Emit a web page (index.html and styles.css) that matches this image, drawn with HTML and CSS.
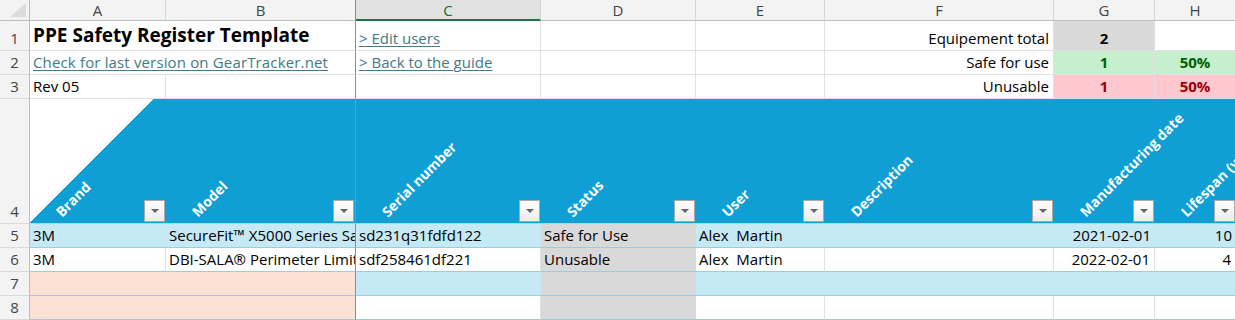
FILE: index.html
```html
<!DOCTYPE html>
<html>
<head>
<meta charset="utf-8">
<link rel="stylesheet" href="styles.css">
</head>
<body>
<div class="sheet">
  <!-- column headers -->
  <div class="corner"><svg width="29" height="20" viewBox="0 0 29 20"><polygon points="26,3 26,17 10,17" fill="#dcdcdc"/></svg></div>
  <div class="h">A</div>
  <div class="h frzh">B</div>
  <div class="h sel">C</div>
  <div class="h">D</div>
  <div class="h">E</div>
  <div class="h">F</div>
  <div class="h">G</div>
  <div class="h">H</div>

  <!-- row 1 -->
  <div class="r">1</div>
  <div class="c over nor title">PPE Safety Register Template</div>
  <div class="c frz"></div>
  <div class="c"><a class="link">&gt; Edit users</a></div>
  <div class="c"></div>
  <div class="c"></div>
  <div class="c right">Equipement total</div>
  <div class="c kpi gray">2</div>
  <div class="c"></div>

  <!-- row 2 -->
  <div class="r">2</div>
  <div class="c over nor"><a class="link wide">Check for last version on GearTracker.net</a></div>
  <div class="c frz"></div>
  <div class="c"><a class="link">&gt; Back to the guide</a></div>
  <div class="c"></div>
  <div class="c"></div>
  <div class="c right">Safe for use</div>
  <div class="c kpi good">1</div>
  <div class="c kpi good">50%</div>

  <!-- row 3 -->
  <div class="r">3</div>
  <div class="c">Rev 05</div>
  <div class="c frz"></div>
  <div class="c"></div>
  <div class="c"></div>
  <div class="c"></div>
  <div class="c right">Unusable</div>
  <div class="c kpi bad">1</div>
  <div class="c kpi bad">50%</div>

  <!-- row 4 : table header -->
  <div class="r r4">4</div>
  <div class="th first"><span class="hl">Brand</span><span class="dd"></span></div>
  <div class="th frz"><span class="hl">Model</span><span class="dd"></span></div>
  <div class="th"><span class="hl">Serial number</span><span class="dd"></span></div>
  <div class="th"><span class="hl">Status</span><span class="dd"></span></div>
  <div class="th"><span class="hl">User</span><span class="dd"></span></div>
  <div class="th"><span class="hl">Description</span><span class="dd"></span></div>
  <div class="th"><span class="hl">Manufacturing date</span><span class="dd"></span></div>
  <div class="th"><span class="hl">Lifespan (years)</span><span class="dd"></span></div>

  <!-- row 5 -->
  <div class="r">5</div>
  <div class="t band">3M</div>
  <div class="t band frz">SecureFit™ X5000 Series Safety Helmet</div>
  <div class="t band">sd231q31fdfd122</div>
  <div class="t stat">Safe for Use</div>
  <div class="t band">Alex&nbsp; Martin</div>
  <div class="t band"></div>
  <div class="t band right">2021-02-01</div>
  <div class="t band right">10</div>

  <!-- row 6 -->
  <div class="r">6</div>
  <div class="t w">3M</div>
  <div class="t w frz">DBI-SALA® Perimeter Limiter Lanyard</div>
  <div class="t w">sdf258461df221</div>
  <div class="t stat">Unusable</div>
  <div class="t w">Alex&nbsp; Martin</div>
  <div class="t w"></div>
  <div class="t w right">2022-02-01</div>
  <div class="t w right">4</div>

  <!-- row 7 -->
  <div class="r">7</div>
  <div class="t peach"></div>
  <div class="t peach frz"></div>
  <div class="t band"></div>
  <div class="t stat"></div>
  <div class="t band"></div>
  <div class="t band"></div>
  <div class="t band"></div>
  <div class="t band"></div>

  <!-- row 8 -->
  <div class="r">8</div>
  <div class="t peach"></div>
  <div class="t peach frz"></div>
  <div class="t w"></div>
  <div class="t stat"></div>
  <div class="t w"></div>
  <div class="t w"></div>
  <div class="t w"></div>
  <div class="t w"></div>
</div>
</body>
</html>
```

FILE: styles.css
```css
html, body {
  margin: 0;
  padding: 0;
  background: #ffffff;
  overflow: hidden;
}

.sheet {
  display: grid;
  grid-template-columns: 30px 136px 190px 185px 155px 129px 229px 101px 81px;
  grid-template-rows: 21px 30px 24px 24px 125px 24px 24px 24px 24px;
  width: 1236px;
  font-family: "Open Sans", "Noto Sans", sans-serif;
  font-size: 15px;
  color: #000;
}

/* column header bar */
.corner {
  background: #f3f3f3;
  border-right: 1px solid #bdbdbd;
  border-bottom: 1px solid #bdbdbd;
  box-sizing: border-box;
  display: flex;
}
.h {
  box-sizing: border-box;
  background: #f3f3f3;
  border-right: 1px solid #d6d6d6;
  border-bottom: 1px solid #bdbdbd;
  color: #444;
  display: flex;
  align-items: center;
  justify-content: center;
  line-height: 18px;
}
.h.frzh {
  border-right-color: #8e8e8e;
}
.h.sel {
  background: #e1e1e1;
  color: #1e6b3b;
  border-bottom: 2px solid #217346;
}

/* row numbers */
.r {
  box-sizing: border-box;
  background: #f3f3f3;
  border-right: 1px solid #bdbdbd;
  border-bottom: 1px solid #dadada;
  color: #444;
  display: flex;
  align-items: flex-end;
  justify-content: center;
  padding-bottom: 2px;
  line-height: 20px;
}

/* cells */
.c, .t {
  box-sizing: border-box;
  display: flex;
  align-items: flex-end;
  padding: 0 3px 2px;
  white-space: nowrap;
  overflow: hidden;
  min-width: 0;
  line-height: 20px;
}
.c {
  border-right: 1px solid #e1e1e1;
  border-bottom: 1px solid #e1e1e1;
}
.c.over { overflow: visible; }
.c.nor { border-right-color: transparent; }
.frz { border-right: 1px solid #8e8e8e !important; }

.title {
  font-weight: 700;
  font-size: 19px;
  padding-bottom: 3px;
  line-height: 24px;
}
.link {
  color: #467886;
  text-decoration: underline;
  text-underline-offset: 2px;
}
.link.wide { letter-spacing: 0.15px; }
.right { justify-content: flex-end; padding-right: 4px; }

.kpi {
  justify-content: center;
  font-weight: 700;
}
.gray { background: #d9d9d9; }
.good { background: #c6efce; color: #006100; }
.bad  { background: #ffc7ce; color: #9c0006; }

/* table header */
.th {
  box-sizing: border-box;
  background: #0f9fd5;
  border-bottom: 1px solid #a6d9ee;
  display: flex;
  align-items: flex-end;
  overflow: visible;
  min-width: 0;
}
.th.first {
  background: linear-gradient(135deg, #ffffff 87px, #0f9fd5 87px);
}
.hl {
  width: 0;
  margin: 0 0 3px 34px;
  white-space: nowrap;
  color: #fff;
  font-weight: 700;
  font-size: 14px;
  line-height: 16px;
  transform: rotate(-45deg);
  transform-origin: 0 100%;
}
.dd {
  box-sizing: border-box;
  width: 21px;
  height: 22px;
  margin: 0 1px 1px auto;
  border: 1px solid #a9a9a9;
  background: linear-gradient(#ffffff, #ececec);
  display: flex;
  align-items: center;
  justify-content: center;
  flex: none;
}
.dd::before {
  content: "";
  border-left: 4px solid transparent;
  border-right: 4px solid transparent;
  border-top: 4px solid #666;
}

/* table body */
.t {
  border-bottom: 1px solid #93cfe9;
}
.t.w { border-right: 1px solid #e1e1e1; }
.band { background: #c6e9f6; }
.peach { background: #fbe2d5; }
.stat { background: #d9d9d9; }
```
